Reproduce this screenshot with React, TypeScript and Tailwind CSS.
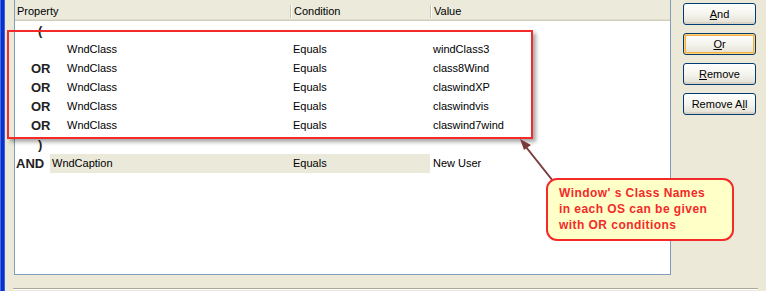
import React from "react";

const F = { fontFamily: '"Liberation Sans", Arial, sans-serif' };

type Row =
  | { kind: "paren"; ch: string }
  | { kind: "cond"; op: string; name: string; cond: string; value: string; nested: boolean; hl?: boolean };

const rows: Row[] = [
  { kind: "paren", ch: "(" },
  { kind: "cond", op: "", name: "WndClass", cond: "Equals", value: "windClass3", nested: true },
  { kind: "cond", op: "OR", name: "WndClass", cond: "Equals", value: "class8Wind", nested: true },
  { kind: "cond", op: "OR", name: "WndClass", cond: "Equals", value: "claswindXP", nested: true },
  { kind: "cond", op: "OR", name: "WndClass", cond: "Equals", value: "claswindvis", nested: true },
  { kind: "cond", op: "OR", name: "WndClass", cond: "Equals", value: "claswind7wind", nested: true },
  { kind: "paren", ch: ")" },
  { kind: "cond", op: "AND", name: "WndCaption", cond: "Equals", value: "New User", nested: false, hl: true },
];

function XPButton({ label, focus }: { label: React.ReactNode; focus?: boolean }) {
  return (
    <div
      className={
        "w-[73px] h-[22px] rounded-[3px] border border-[#003c74] bg-gradient-to-b from-white via-[#f5f4ee] to-[#e3e0d3] flex items-center justify-center text-[11px] text-black " +
        (focus ? "shadow-[inset_0_0_0_1px_#ffd27a,inset_0_0_0_2px_#f5b040]" : "shadow-[inset_0_-2px_0_#d8d3c4]")
      }
    >
      {label}
    </div>
  );
}

export default function App() {
  return (
    <div className="relative w-[766px] h-[291px] overflow-hidden bg-[#ece9d8] flex" style={F}>
      {/* left window border */}
      <div className="w-[5px] h-full flex">
        <div className="w-[1px] h-full bg-[#3d6fe3]" />
        <div className="w-[3px] h-full bg-[#0a2fcf]" />
        <div className="w-[1px] h-full bg-[#3a63dc]" />
      </div>

      <div className="flex flex-col">
        <div className="flex">
          {/* list view */}
          <div className="ml-[9px] w-[657px] h-[275px] border-l border-r border-b border-[#7f9db9] bg-white flex flex-col">
            {/* header */}
            <div className="flex flex-col">
              <div className="h-[19px] bg-[#ebeadb] flex items-start pt-[5px] text-[11px] leading-[13px] text-black">
                <div className="w-[275px] pl-[2px]">Property</div>
                <div className="w-[2px] h-[13px] flex">
                  <div className="w-px h-full bg-[#c7c5b2]" />
                  <div className="w-px h-full bg-white" />
                </div>
                <div className="w-[138px] pl-[2px]">Condition</div>
                <div className="w-[2px] h-[13px] flex">
                  <div className="w-px h-full bg-[#c7c5b2]" />
                  <div className="w-px h-full bg-white" />
                </div>
                <div className="pl-[2px]">Value</div>
              </div>
              <div className="h-px bg-[#e2decd]" />
              <div className="h-px bg-[#d2cebd]" />
            </div>
            {/* rows */}
            <div className="flex flex-col">
              {rows.map((r, i) =>
                r.kind === "paren" ? (
                  <div key={i} className="h-[19px] flex items-center">
                    <div className="pl-[23px] text-[13px] font-bold text-[#222]">{r.ch}</div>
                  </div>
                ) : (
                  <div key={i} className="h-[19px] flex items-center text-[11px] text-black">
                    <div className={"w-[35px] text-[13px] font-bold text-[#222] " + (r.op === "AND" ? "pl-[1px]" : "pl-[16px]")}>
                      {r.op}
                    </div>
                    <div
                      className={
                        "w-[240px] h-full flex items-center " +
                        (r.nested ? "pl-[17px]" : "pl-[2px]") +
                        (r.hl ? " bg-[#ebe9da]" : "")
                      }
                    >
                      {r.name}
                    </div>
                    <div className={"w-[140px] h-full flex items-center pl-[3px]" + (r.hl ? " bg-[#ebe9da]" : "")}>
                      {r.cond}
                    </div>
                    <div className="pl-[3px]">{r.value}</div>
                  </div>
                )
              )}
            </div>
          </div>

          {/* buttons */}
          <div className="ml-[12px] pt-[3px] flex flex-col gap-[8px]">
            <XPButton label={<span><span className="underline">A</span>nd</span>} />
            <XPButton focus label={<span><span className="underline">O</span>r</span>} />
            <XPButton label={<span><span className="underline">R</span>emove</span>} />
            <XPButton label={<span>Remove A<span className="underline">l</span>l</span>} />
          </div>
        </div>
        <div className="ml-[8px] mt-[13px] w-[745px] h-px bg-[#aca899]" />
        <div className="ml-[8px] w-[745px] h-px bg-white" />
      </div>

      {/* annotation: red box */}
      <div className="absolute left-[7px] top-[30px] w-[526px] h-[109px] border-[2px] border-[#f42a2a] shadow-[3px_3px_4px_rgba(0,0,0,0.35)] pointer-events-none" />

      {/* annotation: arrow */}
      <svg className="absolute left-0 top-0 pointer-events-none" width="766" height="291">
        <line x1="553" y1="181" x2="526" y2="147" stroke="#7a3b3b" strokeWidth="2" />
        <polygon points="520,139 531,145 524,150" fill="#7a3b3b" />
      </svg>

      {/* annotation: callout */}
      <div className="absolute left-[546px] top-[178px] w-[188px] h-[63px] rounded-[11px] border-[2px] border-[#f42a2a] bg-[#ffffc8] pl-[11px] pt-[5px] text-[12px] leading-[16px] font-bold text-[#f42a2a] tracking-[0.45px]">
        <div>Window' s Class Names</div>
        <div>in each OS can be given</div>
        <div>with OR conditions</div>
      </div>
    </div>
  );
}
